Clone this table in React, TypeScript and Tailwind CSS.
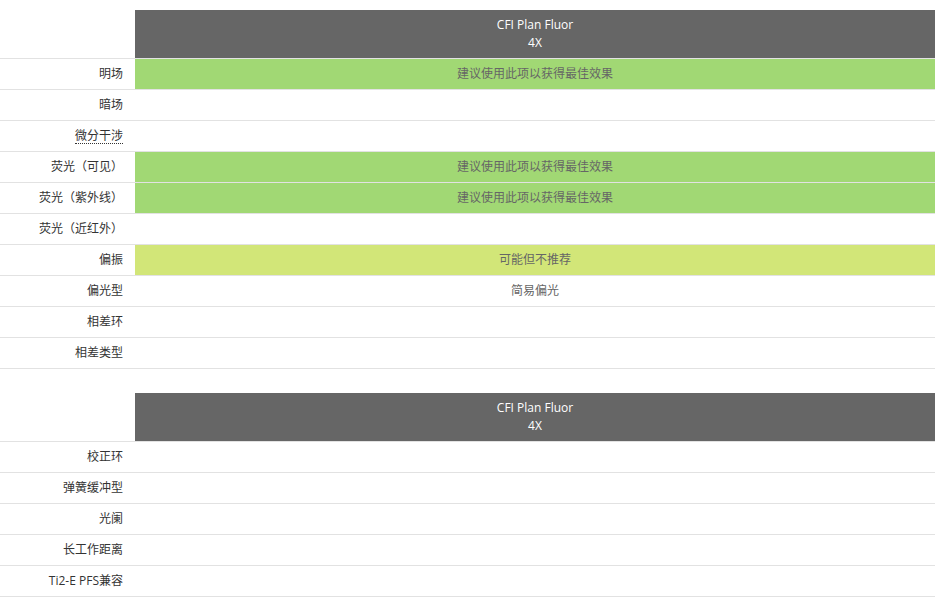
import React from "react";

type Row = { label: string; value?: string; tone?: "green" | "yellow"; abbr?: boolean };

const table1: Row[] = [
  { label: "明场", value: "建议使用此项以获得最佳效果", tone: "green" },
  { label: "暗场" },
  { label: "微分干涉", abbr: true },
  { label: "荧光（可见）", value: "建议使用此项以获得最佳效果", tone: "green" },
  { label: "荧光（紫外线）", value: "建议使用此项以获得最佳效果", tone: "green" },
  { label: "荧光（近红外）" },
  { label: "偏振", value: "可能但不推荐", tone: "yellow" },
  { label: "偏光型", value: "简易偏光" },
  { label: "相差环" },
  { label: "相差类型" },
];

const table2: Row[] = [
  { label: "校正环" },
  { label: "弹簧缓冲型" },
  { label: "光阑" },
  { label: "长工作距离" },
  { label: "Ti2-E PFS兼容" },
];

function Table({ rows }: { rows: Row[] }) {
  return (
    <div className="w-[935px]">
      <div className="flex h-[48px]">
        <div className="w-[135px]" />
        <div className="flex-1 bg-[#666666] text-white flex flex-col items-center justify-center leading-[18px] text-[12px]">
          <div>CFI Plan Fluor</div>
          <div>4X</div>
        </div>
      </div>
      {rows.map((r, i) => (
        <div
          key={i}
          className={`flex h-[31px] border-t border-[#e2e2e2] ${i === rows.length - 1 ? "h-[32px] border-b" : ""}`}
        >
          <div className="w-[135px] pr-3 flex items-center justify-end text-[#333333]">
            {r.abbr ? (
              <span className="border-b border-dotted border-[#333333] leading-[14px]">{r.label}</span>
            ) : (
              r.label
            )}
          </div>
          <div
            className={`flex-1 flex items-center justify-center text-[#666666] ${
              r.tone === "green" ? "bg-[#a1d874]" : r.tone === "yellow" ? "bg-[#d2e678]" : ""
            }`}
          >
            {r.value ?? ""}
          </div>
        </div>
      ))}
    </div>
  );
}

export default function App() {
  return (
    <div
      className="bg-white min-h-[601px] pt-[10px] text-[12px]"
      style={{ fontFamily: '"Open Sans", "Noto Sans CJK SC", sans-serif' }}
    >
      <Table rows={table1} />
      <div className="h-[24px]" />
      <Table rows={table2} />
    </div>
  );
}
